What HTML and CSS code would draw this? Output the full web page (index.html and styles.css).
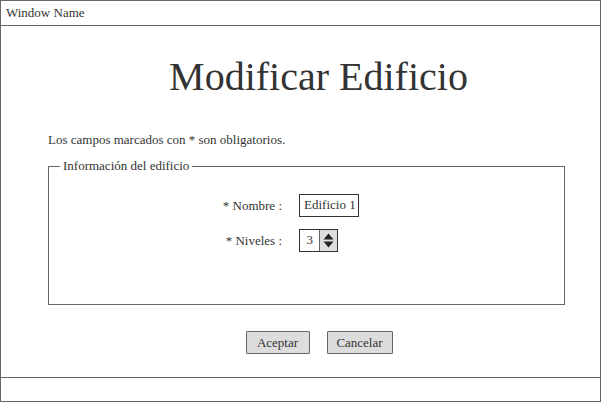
FILE: index.html
```html
<!DOCTYPE html>
<html>
<head>
<meta charset="utf-8">
<link rel="stylesheet" href="styles.css">
</head>
<body>
<div class="window">
  <div class="titlebar">Window Name</div>
  <div class="main">
    <h1 class="heading">Modificar Edificio</h1>
    <p class="note">Los campos marcados con * son obligatorios.</p>
    <fieldset class="group">
      <legend class="legend">Información del edificio</legend>
      <div class="form">
        <label class="label">* Nombre :</label>
        <div class="textbox">Edificio 1</div>
        <label class="label">* Niveles :</label>
        <div class="spinner">
          <span class="spin-value">3</span>
          <span class="spin-btn">
            <svg width="11" height="15" viewBox="0 0 11 15">
              <path d="M5.5 0.5 L10.5 6.5 L0.5 6.5 Z" fill="#222"/>
              <path d="M0.5 8.5 L10.5 8.5 L5.5 14.5 Z" fill="#222"/>
            </svg>
          </span>
        </div>
      </div>
    </fieldset>
    <div class="actions">
      <button class="btn btn-ok">Aceptar</button>
      <button class="btn btn-cancel">Cancelar</button>
    </div>
  </div>
  <div class="statusbar"></div>
</div>
</body>
</html>
```
FILE: styles.css
```css
* { box-sizing: border-box; }
html, body { margin: 0; padding: 0; background: #fff; }
body {
  font-family: "Liberation Serif", "Times New Roman", serif;
  font-size: 13px;
  color: #333;
}
.window {
  width: 601px;
  height: 402px;
  border: 1px solid #666;
  display: flex;
  flex-direction: column;
}
.titlebar {
  height: 25px;
  border-bottom: 1px solid #666;
  padding: 4px 0 0 5px;
  line-height: 16px;
}
.main {
  flex: 1;
  padding: 0 35px 0 47px;
}
.heading {
  margin: 28px 0 0 0;
  font-size: 40px;
  line-height: 46px;
  font-weight: normal;
  text-align: center;
  padding-left: 24px;
}
.note {
  margin: 32px 0 0 0;
  line-height: 16px;
}
.group {
  margin: 10px 0 0 0;
  border: 1px solid #666;
  padding: 0;
  height: 147px;
}
.legend {
  padding: 0 3px;
  margin-left: 11px;
  line-height: 16px;
}
.form {
  display: grid;
  grid-template-columns: 233px auto;
  column-gap: 17px;
  row-gap: 12px;
  margin-top: 20px;
  align-items: center;
}
.label {
  text-align: right;
  line-height: 16px;
}
.textbox {
  justify-self: start;
  width: 60px;
  height: 23px;
  border: 1px solid #333;
  padding: 2px 0 0 4px;
  line-height: 16px;
}
.spinner {
  justify-self: start;
  display: flex;
  width: 39px;
  height: 23px;
  border: 1px solid #333;
}
.spin-value {
  width: 20px;
  text-align: right;
  padding: 2px 6px 0 0;
  line-height: 16px;
  border-right: 1px solid #666;
}
.spin-btn {
  flex: 1;
  background: #ddd;
  display: flex;
  align-items: center;
  justify-content: center;
}
.spin-btn svg { display: block; }
.actions {
  display: flex;
  justify-content: center;
  gap: 17px;
  margin-top: 26px;
  padding-left: 25px;
}
.btn {
  font-family: "Liberation Serif", "Times New Roman", serif;
  font-size: 13px;
  color: #333;
  background: #ddd;
  border: 1px solid #666;
  border-radius: 1px;
  height: 23px;
  padding: 0;
  line-height: 16px;
}
.btn-ok { width: 64px; }
.btn-cancel { width: 66px; }
.statusbar {
  height: 24px;
  border-top: 1px solid #666;
}
```
